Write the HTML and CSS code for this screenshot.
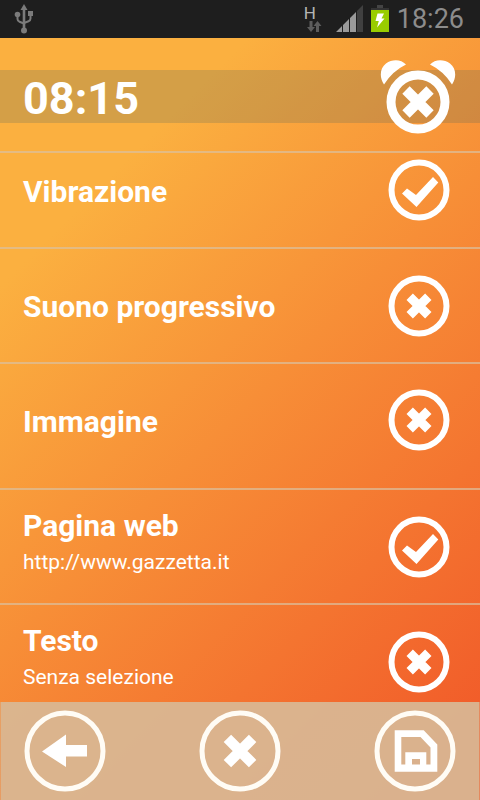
FILE: index.html
```html
<!DOCTYPE html>
<html lang="it">

<head>
    <meta charset="utf-8">
    <meta name="viewport" content="width=device-width, initial-scale=1">
    <title>Sveglia</title>
    <link rel="stylesheet" href="styles.css">
</head>

<body>
    <svg class="defs" width="0" height="0" aria-hidden="true">
        <symbol id="icon-on" viewBox="0 0 62 62">
            <circle cx="31" cy="31" r="27.5" fill="none" stroke="#fff" stroke-width="6" />
            <path d="M14 34.5L19 29.5L28 36L45 18L50.300 23.500L28.500 48Z" fill="#fff" />
        </symbol>
        <symbol id="icon-off" viewBox="0 0 62 62">
            <circle cx="31" cy="31" r="27.5" fill="none" stroke="#fff" stroke-width="6" />
            <path d="M21.700 21.700L40.300 40.300M40.300 21.700L21.700 40.300" stroke="#fff" stroke-width="9" />
        </symbol>
    </svg>

    <div class="status">
        <svg class="usb" width="20" height="32" viewBox="0 0 20 32">
            <g fill="none" stroke="#7b7b7b" stroke-width="2">
                <path d="M10 6V26" stroke-width="2.6" />
                <path d="M3.5 12V16Q3.5 18 5.5 18.700L10 20.500M16.500 11V15.500Q16.500 17.500 14.500 18.200L10 20" />
            </g>
            <path d="M10 1L13.500 7H6.500Z" fill="#7b7b7b" />
            <circle cx="3.500" cy="11.500" r="2.800" fill="#7b7b7b" />
            <rect x="14" y="8" width="5" height="5" fill="#7b7b7b" />
            <circle cx="10" cy="27.500" r="3" fill="#7b7b7b" />
        </svg>
        <div class="data">
            <span>H</span>
            <svg width="16" height="12" viewBox="0 0 16 12">
                <path d="M3.500 0H6.500V6H9L5 11L1 6H3.500ZM10 11H13V5H15.500L11.500 0L7.500 5H10Z" fill="#5c5c5c" />
            </svg>
        </div>
        <svg class="signal" width="28" height="28" viewBox="0 0 28 28">
            <path d="M0 27L6 21V27ZM7 20L13 14V27H7ZM14 13L20 7V27H14Z" fill="#9a9a9a" />
            <path d="M21 6L27 0V27H21Z" fill="#404040" />
        </svg>
        <svg class="battery" width="18" height="28" viewBox="0 0 18 28">
            <rect x="6" y="0" width="6" height="3" fill="#444" />
            <rect x="0" y="3" width="18" height="2" fill="#333" />
            <rect x="0" y="5" width="18" height="22" fill="#9c0" />
            <path d="M6.500 8.500H13L10.500 13.500H13.500L6 22.500L7.800 16H4.500Z" fill="#fff" />
        </svg>
        <time class="clock">18:26</time>
    </div>

    <div class="screen">
        <header class="header">
            <label class="alarm">
                <span class="time">08:15</span>
                <input type="checkbox" class="check">
                <svg class="bell" width="76" height="76" viewBox="0 0 76 76">
                    <path d="M4 25.500C-1 18 0 9 6 4.500C12 0 21 0 26 5.500Q12.500 12 4 25.500ZM72 25.500C77 18 76 9 70 4.500C64 0 55 0 50 5.500Q63.500 12 72 25.500Z" fill="#fff" />
                    <circle cx="38" cy="43" r="27" fill="none" stroke="#fff" stroke-width="9" />
                    <path d="M26 31L50 55M50 31L26 55" stroke="#fff" stroke-width="10.400" />
                </svg>
            </label>
        </header>

        <main class="list">
            <label class="row row-first">
                <span class="text"><span class="title">Vibrazione</span></span>
                <input type="checkbox" class="check" checked>
                <svg class="on"><use href="#icon-on" /></svg>
                <svg class="off"><use href="#icon-off" /></svg>
            </label>
            <label class="row">
                <span class="text"><span class="title">Suono progressivo</span></span>
                <input type="checkbox" class="check">
                <svg class="on"><use href="#icon-on" /></svg>
                <svg class="off"><use href="#icon-off" /></svg>
            </label>
            <label class="row row-tall">
                <span class="text"><span class="title">Immagine</span></span>
                <input type="checkbox" class="check">
                <svg class="on"><use href="#icon-on" /></svg>
                <svg class="off"><use href="#icon-off" /></svg>
            </label>
            <label class="row">
                <span class="text two-lines">
                    <span class="title">Pagina web</span>
                    <span class="value">http://www.gazzetta.it</span>
                </span>
                <input type="checkbox" class="check" checked>
                <svg class="on"><use href="#icon-on" /></svg>
                <svg class="off"><use href="#icon-off" /></svg>
            </label>
            <label class="row">
                <span class="text two-lines">
                    <span class="title">Testo</span>
                    <span class="value">Senza selezione</span>
                </span>
                <input type="checkbox" class="check">
                <svg class="on"><use href="#icon-on" /></svg>
                <svg class="off"><use href="#icon-off" /></svg>
            </label>
        </main>

        <footer class="footer">
            <button type="button" aria-label="Indietro">
                <svg width="82" height="82" viewBox="0 0 82 82">
                    <circle cx="41" cy="41" r="38" fill="none" stroke="#fffcf5" stroke-width="5" />
                    <path d="M18 41.500L42 24.500V35H63V46.500H42V57Z" fill="#fff" />
                </svg>
            </button>
            <button type="button" aria-label="Annulla">
                <svg width="82" height="82" viewBox="0 0 82 82">
                    <circle cx="41" cy="41" r="38" fill="none" stroke="#fffcf5" stroke-width="5" />
                    <path d="M28.400 28.400L53.600 53.600M53.600 28.400L28.400 53.600" stroke="#fff" stroke-width="10.500" />
                </svg>
            </button>
            <button type="button" aria-label="Salva">
                <svg width="82" height="82" viewBox="0 0 82 82">
                    <circle cx="41" cy="41" r="38" fill="none" stroke="#fffcf5" stroke-width="5" />
                    <path fill-rule="evenodd" d="M20.700 20.300H49.700L63.300 34.500V61.700H20.700ZM27.300 27V54.500H31.300V42.300H52.300V54.500H56.500V37.500L46.500 27ZM38 49H46V54.500H38Z" fill="#fff" />
                </svg>
            </button>
        </footer>
    </div>
</body>

</html>
```

FILE: styles.css
```css
* {
    margin: 0;
    padding: 0;
    box-sizing: border-box;
}

body {
    display: flex;
    flex-direction: column;
    height: 100vh;
    font-family: Roboto, "Open Sans", sans-serif;
    color: #fff;
    background: #1e1e1e;
}

svg {
    display: block;
    flex: none;
}

.defs {
    position: absolute;
}

/* status bar */
.status {
    display: flex;
    align-items: center;
    height: 38px;
    padding: 0 16px 0 14px;
    color: #8c8c8c;
}

.data {
    margin-left: auto;
    font-size: 17px;
    line-height: 16px;
}

.data span {
    display: block;
    color: #b4b4b4;
}

.data svg {
    margin-left: 2px;
}

.signal {
    margin-left: 14px;
}

.battery {
    margin: 0 8px 0 7px;
}

.clock {
    font-size: 27px;
    line-height: 38px;
}

/* alarm settings */
.screen {
    display: flex;
    flex: 1;
    flex-direction: column;
    min-height: 0;
    background: linear-gradient(135deg, #fbb040 20%, #f15a29 95%);
}

.header {
    padding: 32px 0 28px;
}

.alarm {
    display: flex;
    align-items: center;
    justify-content: space-between;
    height: 53px;
    padding: 0 24px 0 23px;
    background: rgba(73, 100, 95, 0.22);
}

.time {
    padding-top: 3px;
    font-size: 45px;
    font-weight: bold;
}

.check {
    position: absolute;
    opacity: 0;
}

.list {
    flex: 1;
    min-height: 0;
    overflow: hidden;
}

.row {
    display: flex;
    align-items: center;
    justify-content: space-between;
    height: 115px;
    padding: 0 30px 0 23px;
    border-top: 2px solid rgba(218, 192, 160, 0.7);
}

.row-first {
    height: 96px;
    padding-bottom: 20px;
}

.row-tall {
    height: 126px;
    padding-bottom: 12px;
}

.row svg {
    width: 62px;
    height: 62px;
}

.check:checked ~ .off,
.check:not(:checked) ~ .on {
    display: none;
}

.text {
    padding-top: 3px;
}

.two-lines {
    padding-bottom: 12px;
}

.title {
    display: block;
    font-size: 30px;
    font-weight: bold;
    line-height: 40px;
}

.value {
    display: block;
    font-size: 21px;
    line-height: 32px;
}

/* bottom buttons */
.footer {
    display: flex;
    align-items: center;
    justify-content: space-between;
    height: 98px;
    padding: 0 23px;
    border: solid rgba(216, 184, 148, 0.5);
    border-width: 0 1px;
    background: rgba(216, 184, 148, 0.93);
    background-clip: padding-box;
}

.footer button {
    border: none;
    background: none;
    cursor: pointer;
}
```
